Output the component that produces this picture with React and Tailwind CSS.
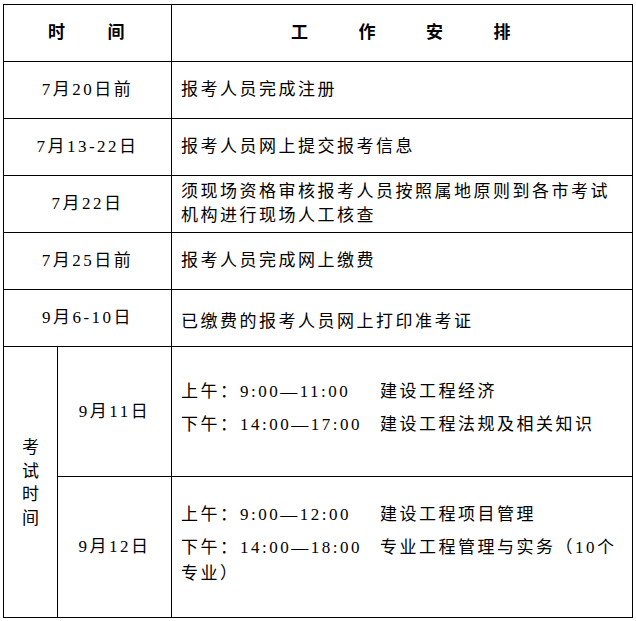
import React from 'react';

const rows = [
  { time: '7月20日前', task: '报考人员完成注册' },
  { time: '7月13-22日', task: '报考人员网上提交报考信息' },
  { time: '7月22日', task: '须现场资格审核报考人员按照属地原则到各市考试机构进行现场人工核查' },
  { time: '7月25日前', task: '报考人员完成网上缴费' },
  { time: '9月6-10日', task: '已缴费的报考人员网上打印准考证', low: true },
];

const exams = [
  {
    day: '9月11日',
    h: 'h-[130px]',
    items: [
      ['上午：', '9:00—11:00', '建设工程经济'],
      ['下午：', '14:00—17:00', '建设工程法规及相关知识'],
    ],
  },
  {
    day: '9月12日',
    h: 'h-[141px]',
    items: [
      ['上午：', '9:00—12:00', '建设工程项目管理'],
      ['下午：', '14:00—18:00', '专业工程管理与实务（10个', '专业）'],
    ],
  },
];

const cell = 'border border-black align-middle';

const App = () => {
  return (
    <div className="bg-white w-[636px] h-[621px] pt-[4px] pl-[3px] font-['Liberation_Serif','Noto_Sans_CJK_SC',serif] text-[17px] tracking-[2.5px] text-black">
      <table className="table-fixed border-collapse w-[629px]">
        <colgroup>
          <col className="w-[54px]" />
          <col className="w-[114px]" />
          <col className="w-[461px]" />
        </colgroup>
        <tbody>
          {/* header */}
          <tr className="h-[57px]">
            <td colSpan={2} className={cell}>
              <div className="flex justify-center gap-[40px] font-bold">
                <span>时</span>
                <span>间</span>
              </div>
            </td>
            <td className={cell}>
              <div className="flex justify-center gap-[48px] font-bold">
                <span>工</span>
                <span>作</span>
                <span>安</span>
                <span>排</span>
              </div>
            </td>
          </tr>

          {rows.map((r) => (
            <tr key={r.time} className="h-[57px]">
              <td colSpan={2} className={cell + ' text-center'}>
                {r.time}
              </td>
              <td className={cell + ' pl-[9px] pr-[6px] leading-[24px]' + (r.low ? ' pt-[8px]' : '')}>
                {r.task}
              </td>
            </tr>
          ))}

          {exams.map((ex, i) => (
            <tr key={ex.day} className={ex.h}>
              {i === 0 && (
                <td rowSpan={2} className={cell}>
                  <div className="flex flex-col items-center leading-[23.5px] tracking-normal pt-[2px]">
                    <span>考</span>
                    <span>试</span>
                    <span>时</span>
                    <span>间</span>
                  </div>
                </td>
              )}
              <td className={cell + ' text-center'}>{ex.day}</td>
              <td className={cell + ' pl-[9px] pr-[8px] pb-[6px]'}>
                <div className="flex flex-col gap-[7px] leading-[26px]">
                  {ex.items.map(([label, t, subject, rest]) => (
                    <div key={t}>
                      <div className="flex whitespace-nowrap">
                        <span className="w-[59px]">{label}</span>
                        <span className="w-[140px]">{t}</span>
                        <span>{subject}</span>
                      </div>
                      {rest && <div>{rest}</div>}
                    </div>
                  ))}
                </div>
              </td>
            </tr>
          ))}
        </tbody>
      </table>
    </div>
  );
};

export default App;
